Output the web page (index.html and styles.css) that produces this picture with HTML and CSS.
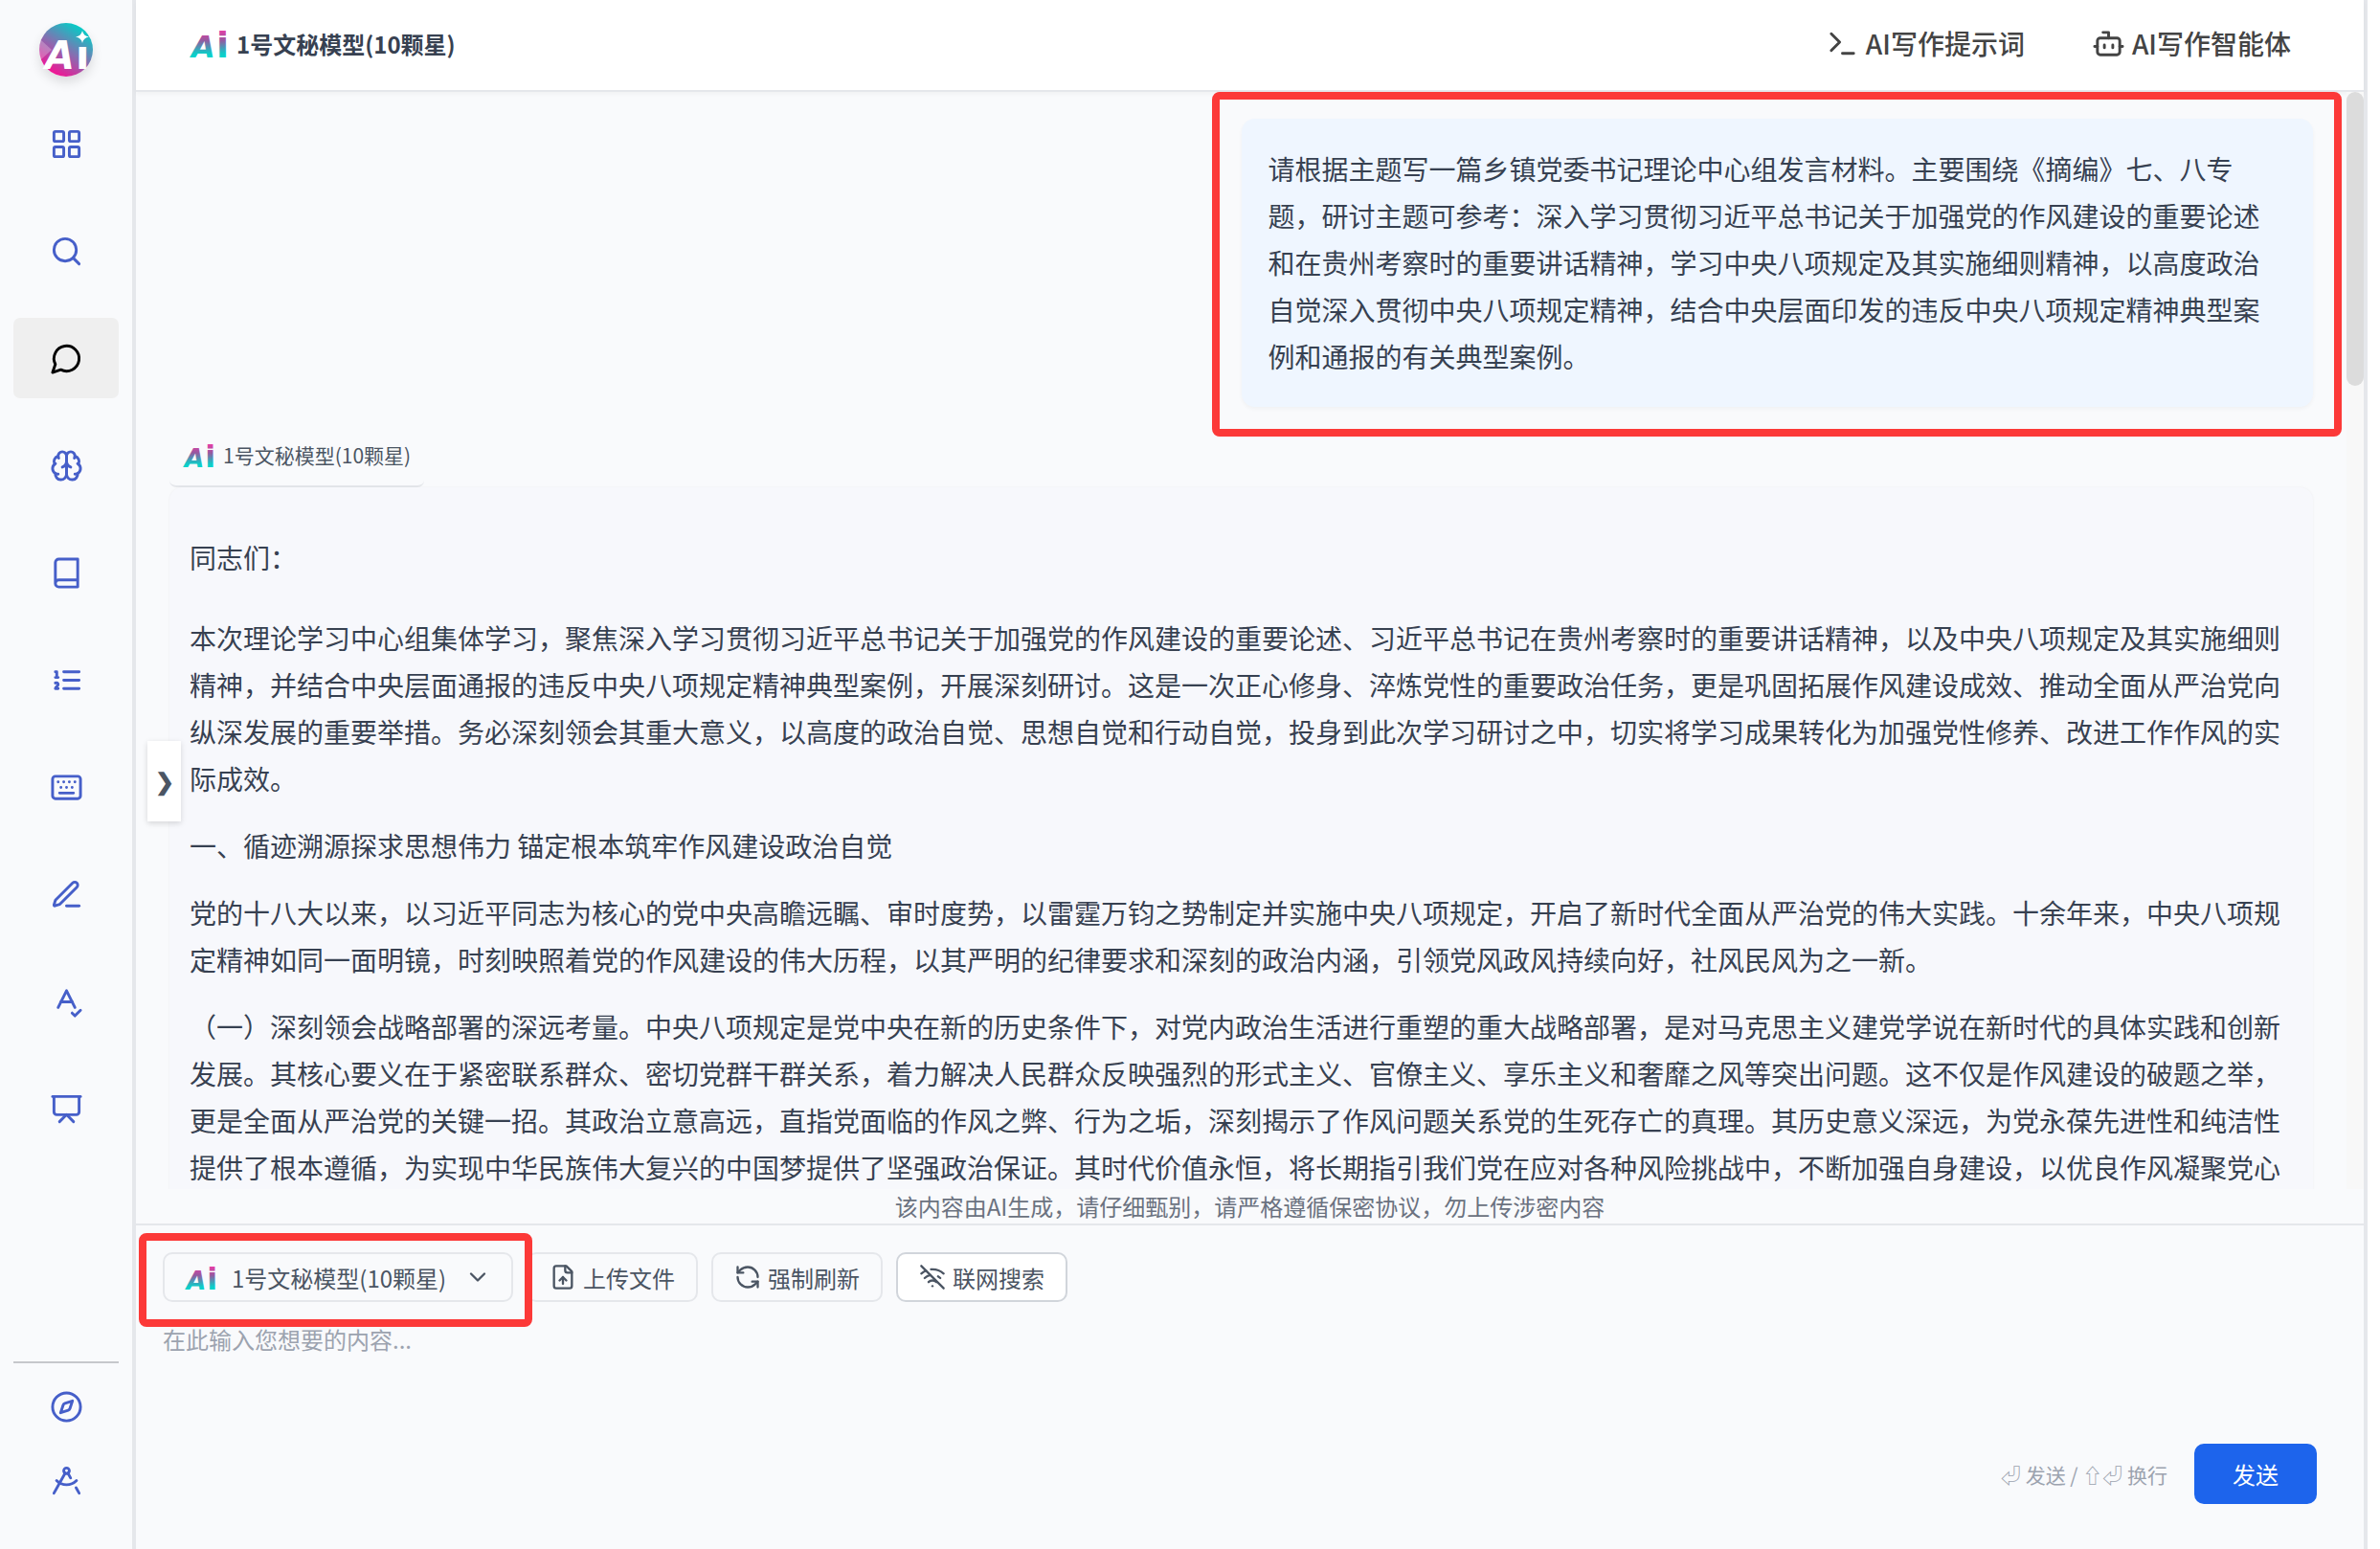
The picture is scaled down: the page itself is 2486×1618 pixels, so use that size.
FILE: index.html
```html
<!DOCTYPE html>
<html lang="zh-CN">
<head>
    <meta charset="UTF-8">
    <meta name="viewport" content="width=device-width, initial-scale=1.0">
    <title>AI写作</title>
    <link rel="stylesheet" href="styles.css">
</head>
<body>
    <!-- Shared shapes -->
    <svg class="defs" aria-hidden="true">
        <defs>
            <linearGradient id="ai-fill" gradientUnits="userSpaceOnUse" x1="0" y1="6" x2="0" y2="36">
                <stop offset="0" stop-color="#f03aa6"/>
                <stop offset="0.4" stop-color="#96589f"/>
                <stop offset="0.85" stop-color="#12c8c6"/>
                <stop offset="1" stop-color="#05d6cc"/>
            </linearGradient>
            <linearGradient id="brand-fill" x1="0.25" y1="1" x2="0.8" y2="0.1">
                <stop offset="0" stop-color="#ff0a90"/>
                <stop offset="0.5" stop-color="#8a6bb0"/>
                <stop offset="1" stop-color="#05ccc6"/>
            </linearGradient>
            <symbol id="ai-logo" viewBox="0 0 42 42">
                <text class="logo-a" x="2" y="36" fill="url(#ai-fill)">A</text>
                <text class="logo-i" x="28" y="36" fill="url(#ai-fill)">i</text>
            </symbol>
        </defs>
    </svg>

    <div class="app">
        <nav class="sidebar">
            <a href="#" class="brand" aria-label="首页">
                <svg viewBox="0 0 56 56">
                    <circle cx="28" cy="28" r="28" fill="url(#brand-fill)"/>
                    <path d="M2 18 L13 28 L1 39 A28 28 0 0 1 2 18Z" fill="#fff" fill-opacity="0.25"/>
                    <path d="M45 8 Q46 13.500 52 14.500 Q46 15.500 45 21 Q44 15.500 38 14.500 Q44 13.500 45 8Z" fill="#fff"/>
                    <text class="brand-a" x="6" y="48" fill="#fff">A</text>
                    <text class="brand-i" x="38" y="48" fill="#fff">ı</text>
                </svg>
            </a>
            <a href="#" class="nav-item" aria-label="应用">
                <svg class="icon" viewBox="0 0 24 24"><rect x="3" y="3" width="7" height="7" rx="1"/><rect x="14" y="3" width="7" height="7" rx="1"/><rect x="14" y="14" width="7" height="7" rx="1"/><rect x="3" y="14" width="7" height="7" rx="1"/></svg>
            </a>
            <a href="#" class="nav-item" aria-label="搜索">
                <svg class="icon" viewBox="0 0 24 24"><circle cx="11" cy="11" r="8"/><path d="m21 21-4.300-4.300"/></svg>
            </a>
            <a href="#" class="nav-item active" aria-label="对话">
                <svg class="icon" viewBox="0 0 24 24"><path d="M7.900 20A9 9 0 1 0 4 16.100L2 22Z"/></svg>
            </a>
            <a href="#" class="nav-item" aria-label="智能">
                <svg class="icon" viewBox="0 0 24 24"><path d="M12 5a3 3 0 1 0-5.997.125 4 4 0 0 0-2.526 5.770 4 4 0 0 0 .556 6.588A4 4 0 1 0 12 18Z"/><path d="M12 5a3 3 0 1 1 5.997.125 4 4 0 0 1 2.526 5.770 4 4 0 0 1-.556 6.588A4 4 0 1 1 12 18Z"/><path d="M15 13a4.500 4.500 0 0 1-3-4 4.500 4.500 0 0 1-3 4"/><path d="M17.599 6.500a3 3 0 0 0 .399-1.375"/><path d="M6.003 5.125A3 3 0 0 0 6.401 6.500"/><path d="M3.477 10.896a4 4 0 0 1 .585-.396"/><path d="M19.938 10.500a4 4 0 0 1 .585.396"/><path d="M6 18a4 4 0 0 1-1.967-.516"/><path d="M19.967 17.484A4 4 0 0 1 18 18"/></svg>
            </a>
            <a href="#" class="nav-item" aria-label="知识库">
                <svg class="icon" viewBox="0 0 24 24"><path d="M4 19.500v-15A2.500 2.500 0 0 1 6.500 2H20v20H6.500a2.500 2.500 0 0 1 0-5H20"/></svg>
            </a>
            <a href="#" class="nav-item" aria-label="提纲">
                <svg class="icon" viewBox="0 0 24 24"><path d="M10 6h11M10 12h11M10 18h11M4 6h1v4M4 10h2M6 18H4c0-1 2-2 2-3s-1-1.500-2-1"/></svg>
            </a>
            <a href="#" class="nav-item" aria-label="输入">
                <svg class="icon" viewBox="0 0 24 24"><rect x="2" y="4" width="20" height="16" rx="2"/><path d="M6 8h.01M10 8h.01M14 8h.01M18 8h.01M8 12h.01M12 12h.01M16 12h.01M7 16h10"/></svg>
            </a>
            <a href="#" class="nav-item" aria-label="写作">
                <svg class="icon" viewBox="0 0 24 24"><path d="M12 20h9"/><path d="M16.376 3.622a1 1 0 0 1 3.002 3.002L7.368 18.635a2 2 0 0 1-.855.506l-2.872.838a.5.5 0 0 1-.620-.620l.838-2.872a2 2 0 0 1 .506-.854z"/></svg>
            </a>
            <a href="#" class="nav-item" aria-label="校对">
                <svg class="icon" viewBox="0 0 24 24"><path d="m6 16 6-12 6 12"/><path d="M8 12h8"/><path d="m16 20 2 2 4-4"/></svg>
            </a>
            <a href="#" class="nav-item" aria-label="演示">
                <svg class="icon" viewBox="0 0 24 24"><path d="M2 3h20"/><path d="M21 3v11a2 2 0 0 1-2 2H5a2 2 0 0 1-2-2V3"/><path d="m7 21 5-5 5 5"/></svg>
            </a>
            <div class="sidebar-bottom">
                <a href="#" aria-label="发现">
                    <svg class="icon" viewBox="0 0 24 24"><circle cx="12" cy="12" r="10"/><path d="m16.240 7.760-1.804 5.411a2 2 0 0 1-1.265 1.265L7.760 16.240l1.804-5.411a2 2 0 0 1 1.265-1.265z"/></svg>
                </a>
                <a href="#" aria-label="工具">
                    <svg class="icon" viewBox="0 0 24 24"><path d="m12.990 6.740 1.930 3.440"/><path d="M19.136 12a10 10 0 0 1-14.271 0"/><path d="m21 21-2.160-3.840"/><path d="m3 21 8.020-14.260"/><circle cx="12" cy="5" r="2"/></svg>
                </a>
            </div>
        </nav>

        <main class="main">
            <header class="header">
                <h1 class="title"><svg class="logo-large"><use href="#ai-logo"/></svg>1号文秘模型(10颗星)</h1>
                <div class="header-links">
                    <a href="#" class="header-link">
                        <svg class="icon" viewBox="0 0 24 24"><path d="m4 17 6-6-6-6"/><path d="M12 19h8"/></svg>AI写作提示词
                    </a>
                    <a href="#" class="header-link">
                        <svg class="icon" viewBox="0 0 24 24"><path d="M12 8V4H8"/><rect x="4" y="8" width="16" height="12" rx="2"/><path d="M2 14h2M20 14h2M15 13v2M9 13v2"/></svg>AI写作智能体
                    </a>
                </div>
            </header>

            <section class="chat">
                <div class="messages">
                    <div class="user-message">
                        <p>请根据主题写一篇乡镇党委书记理论中心组发言材料。主要围绕《摘编》七、八专题，研讨主题可参考：深入学习贯彻习近平总书记关于加强党的作风建设的重要论述和在贵州考察时的重要讲话精神，学习中央八项规定及其实施细则精神，以高度政治自觉深入贯彻中央八项规定精神，结合中央层面印发的违反中央八项规定精神典型案例和通报的有关典型案例。</p>
                        <div class="mark mark-message"></div>
                    </div>
                    <div class="model-tag"><svg class="logo-small"><use href="#ai-logo"/></svg>1号文秘模型(10颗星)</div>
                    <article class="ai-message">
                        <p class="greeting">同志们：</p>
                        <p>本次理论学习中心组集体学习，聚焦深入学习贯彻习近平总书记关于加强党的作风建设的重要论述、习近平总书记在贵州考察时的重要讲话精神，以及中央八项规定及其实施细则精神，并结合中央层面通报的违反中央八项规定精神典型案例，开展深刻研讨。这是一次正心修身、淬炼党性的重要政治任务，更是巩固拓展作风建设成效、推动全面从严治党向纵深发展的重要举措。务必深刻领会其重大意义，以高度的政治自觉、思想自觉和行动自觉，投身到此次学习研讨之中，切实将学习成果转化为加强党性修养、改进工作作风的实际成效。</p>
                        <p>一、循迹溯源探求思想伟力 锚定根本筑牢作风建设政治自觉</p>
                        <p>党的十八大以来，以习近平同志为核心的党中央高瞻远瞩、审时度势，以雷霆万钧之势制定并实施中央八项规定，开启了新时代全面从严治党的伟大实践。十余年来，中央八项规定精神如同一面明镜，时刻映照着党的作风建设的伟大历程，以其严明的纪律要求和深刻的政治内涵，引领党风政风持续向好，社风民风为之一新。</p>
                        <p>（一）深刻领会战略部署的深远考量。中央八项规定是党中央在新的历史条件下，对党内政治生活进行重塑的重大战略部署，是对马克思主义建党学说在新时代的具体实践和创新发展。其核心要义在于紧密联系群众、密切党群干群关系，着力解决人民群众反映强烈的形式主义、官僚主义、享乐主义和奢靡之风等突出问题。这不仅是作风建设的破题之举，更是全面从严治党的关键一招。其政治立意高远，直指党面临的作风之弊、行为之垢，深刻揭示了作风问题关系党的生死存亡的真理。其历史意义深远，为党永葆先进性和纯洁性提供了根本遵循，为实现中华民族伟大复兴的中国梦提供了坚强政治保证。其时代价值永恒，将长期指引我们党在应对各种风险挑战中，不断加强自身建设，以优良作风凝聚党心</p>
                    </article>
                </div>
                <div class="scrollbar"><div class="scrollbar-thumb"></div></div>
            </section>

            <p class="notice">该内容由AI生成，请仔细甄别，请严格遵循保密协议，勿上传涉密内容</p>

            <form class="composer">
                <div class="toolbar">
                    <div class="model-select">
                        <svg class="logo-small"><use href="#ai-logo"/></svg>
                        <select id="model" name="model" aria-label="模型">
                            <option>1号文秘模型(10颗星)</option>
                        </select>
                        <svg class="icon icon-small" viewBox="0 0 24 24"><path d="m6 9 6 6 6-6"/></svg>
                        <div class="mark mark-select"></div>
                    </div>
                    <button type="button" class="tool-button">
                        <svg class="icon icon-small" viewBox="0 0 24 24"><path d="M15 2H6a2 2 0 0 0-2 2v16a2 2 0 0 0 2 2h12a2 2 0 0 0 2-2V7Z"/><path d="M14 2v4a2 2 0 0 0 2 2h4"/><path d="M12 12v6"/><path d="m15 15-3-3-3 3"/></svg>上传文件
                    </button>
                    <button type="button" class="tool-button">
                        <svg class="icon icon-small" viewBox="0 0 24 24"><path d="M21 12a9 9 0 0 0-9-9 9.750 9.750 0 0 0-6.740 2.740L3 8"/><path d="M3 3v5h5"/><path d="M3 12a9 9 0 0 0 9 9 9.750 9.750 0 0 0 6.740-2.740L21 16"/><path d="M16 16h5v5"/></svg>强制刷新
                    </button>
                    <button type="button" class="tool-button search-toggle">
                        <svg class="icon icon-small" viewBox="0 0 24 24"><path d="M12 20h.01"/><path d="M8.500 16.429a5 5 0 0 1 7 0"/><path d="M5 12.859a10 10 0 0 1 5.170-2.690"/><path d="M19 12.859a10 10 0 0 0-2.007-1.523"/><path d="M2 8.820a15 15 0 0 1 4.177-2.643"/><path d="M22 8.820a15 15 0 0 0-11.288-3.764"/><path d="m2 2 20 20"/></svg>联网搜索
                    </button>
                </div>
                <textarea class="prompt" name="prompt" aria-label="输入内容" placeholder="在此输入您想要的内容..."></textarea>
                <div class="send-row">
                    <span class="hint">⏎ 发送 / ⇧⏎ 换行</span>
                    <button type="submit" class="send-button">发送</button>
                </div>
            </form>

            <button type="button" class="expand" aria-label="展开">❯</button>
        </main>
    </div>
</body>
</html>
```

FILE: styles.css
```css
/* Reset */
* {
    margin: 0;
    padding: 0;
    box-sizing: border-box;
}

body {
    font-family: "Noto Sans CJK SC", "Noto Sans", sans-serif;
    font-size: 24px;
    color: #374151;
    background-color: #fff;
    padding-right: 13px;
}

a {
    color: inherit;
    text-decoration: none;
}

button,
select,
textarea {
    font: inherit;
    color: inherit;
    border: none;
    background: none;
    outline: none;
}

button {
    cursor: pointer;
}

svg {
    display: block;
    flex-shrink: 0;
}

.defs {
    position: absolute;
    width: 0;
    height: 0;
}

.app {
    display: flex;
    height: 100vh;
    background-color: #f9fafc;
    border-right: 4px solid #e5e7eb;
}

/* Icons and logos */
.icon {
    width: 35px;
    height: 35px;
    fill: none;
    stroke: currentColor;
    stroke-width: 2;
    stroke-linecap: round;
    stroke-linejoin: round;
}

.icon-small {
    width: 28px;
    height: 28px;
}

.logo-large {
    width: 42px;
    height: 42px;
}

.logo-small {
    width: 35px;
    height: 35px;
}

.logo-a,
.logo-i,
.brand-a,
.brand-i {
    font-family: "DejaVu Sans", sans-serif;
    font-weight: 700;
}

.logo-a {
    font-size: 32px;
    font-style: italic;
}

.logo-i {
    font-size: 38px;
}

.brand-a {
    font-size: 40px;
    font-style: italic;
}

.brand-i {
    font-size: 42px;
}

/* Sidebar */
.sidebar {
    display: flex;
    flex-direction: column;
    align-items: center;
    gap: 28px;
    width: 142px;
    flex-shrink: 0;
    padding: 24px 14px 54px;
    border-right: 4px solid #e5e7eb;
    color: #465fc9;
}

.brand {
    width: 56px;
    height: 56px;
    border-radius: 50%;
    box-shadow: 0 6px 12px rgba(0, 0, 0, 0.12);
}

.brand svg {
    overflow: visible;
}

.nav-item {
    display: flex;
    align-items: center;
    justify-content: center;
    width: 100%;
    height: 84px;
    border-radius: 7px;
}

.nav-item.active {
    background-color: #efefef;
    color: #000;
}

.sidebar-bottom {
    display: flex;
    flex-direction: column;
    align-items: center;
    gap: 42px;
    width: 100%;
    margin-top: auto;
    padding-top: 28px;
    border-top: 2px solid #c6c8cb;
}

/* Main column */
.main {
    position: relative;
    display: flex;
    flex-direction: column;
    flex: 1;
    min-width: 0;
}

.header {
    display: flex;
    align-items: center;
    justify-content: space-between;
    height: 96px;
    flex-shrink: 0;
    padding: 0 76px 4px 56px;
    background-color: #fff;
    border-bottom: 2px solid #e5e7eb;
    box-shadow: 0 2px 4px rgba(0, 0, 0, 0.04);
}

.title {
    display: flex;
    align-items: center;
    gap: 7px;
    font-size: 24px;
    font-weight: 600;
}

.header-links {
    display: flex;
    gap: 70px;
}

.header-link {
    display: flex;
    align-items: center;
    gap: 7px;
    font-size: 28px;
    font-weight: 500;
    color: #444;
}

/* Messages */
.chat {
    display: flex;
    flex: 1;
    min-height: 0;
    overflow: hidden;
}

.messages {
    display: flex;
    flex-direction: column;
    align-items: flex-start;
    flex: 1;
    min-width: 0;
    padding: 28px 35px 0;
    font-size: 28px;
    line-height: 49px;
}

.user-message {
    position: relative;
    align-self: flex-end;
    width: 50%;
    padding: 28px;
    border-radius: 14px;
    background-color: #eff6ff;
    box-shadow: 0 2px 4px rgba(0, 0, 0, 0.04);
}

.model-tag {
    display: flex;
    align-items: center;
    gap: 7px;
    margin-top: 19px;
    padding: 14px;
    border-bottom: 2px solid #e5e7eb;
    border-radius: 7px;
    font-size: 21px;
    line-height: 35px;
    color: #4b5563;
}

.ai-message {
    width: 100%;
    padding: 49px 21px 28px;
    border-radius: 14px;
    background-color: #f7f8fc;
    box-shadow: 0 0 3px rgba(0, 0, 0, 0.05);
}

.ai-message p {
    margin-bottom: 21px;
}

.ai-message .greeting {
    margin-bottom: 35px;
}

.scrollbar {
    width: 18px;
    flex-shrink: 0;
    background-color: #f8f8f8;
}

.scrollbar-thumb {
    height: 307px;
    border-radius: 9px;
    background-color: #dcdcdc;
}

.notice {
    line-height: 36px;
    text-align: center;
    color: #6b7280;
}

/* Red frames around the highlighted parts */
.mark {
    position: absolute;
    border: 8px solid #fc3938;
    border-radius: 8px;
    pointer-events: none;
}

.mark-message {
    inset: -28px -30px -31px -31px;
}

.mark-select {
    inset: -22px -22px -28px -27px;
}

/* Composer */
.composer {
    padding: 28px 49px 47px 28px;
    border-top: 2px solid #e5e7eb;
}

.toolbar {
    display: flex;
    gap: 14px;
    color: #4b5563;
}

.model-select,
.tool-button {
    display: flex;
    align-items: center;
    height: 52px;
    padding: 0 21px;
    border: 2px solid #e5e7eb;
    border-radius: 10px;
}

.model-select {
    position: relative;
    gap: 14px;
    width: 366px;
}

.model-select select {
    flex: 1;
    min-width: 0;
    appearance: none;
    line-height: 35px;
}

.tool-button {
    justify-content: center;
    gap: 7px;
    min-width: 179px;
}

.search-toggle {
    background-color: #fff;
    border-color: #d1d5db;
}

.prompt {
    display: block;
    width: 100%;
    height: 127px;
    margin-top: 21px;
    line-height: 35px;
    resize: none;
}

.prompt::placeholder {
    color: #9ca3af;
}

.send-row {
    display: flex;
    align-items: center;
    justify-content: flex-end;
    gap: 28px;
}

.hint {
    font-size: 21px;
    color: #9ca3af;
}

.send-button {
    width: 128px;
    height: 63px;
    border-radius: 10px;
    background-color: #1d64ec;
    color: #fff;
}

/* Side panel handle */
.expand {
    position: absolute;
    left: 12px;
    top: calc(50% - 35px);
    width: 35px;
    height: 84px;
    padding-bottom: 4px;
    background-color: #fff;
    color: #4b5563;
    font-size: 24px;
    font-weight: 700;
    box-shadow: 0 2px 6px rgba(0, 0, 0, 0.15);
}
```
